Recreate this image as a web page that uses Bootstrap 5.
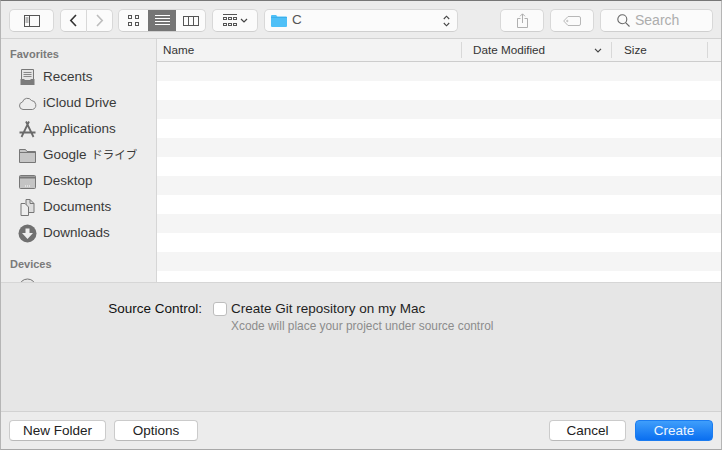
<!DOCTYPE html>
<html lang="en">
<head>
<meta charset="utf-8">
<title>Save dialog</title>
<link href="https://cdn.jsdelivr.net/npm/bootstrap@5.3.0/dist/css/bootstrap.min.css" rel="stylesheet">
<style>
html,body{margin:0;width:722px;height:450px;overflow:hidden;background:#ececec}
body{font-family:"Helvetica Neue","Liberation Sans",Arial,"Noto Sans CJK JP",sans-serif;font-size:13.5px;color:#2b2b2b}
.dlg{width:722px;height:450px;border-left:1px solid #b5b5b5;border-right:1px solid #b5b5b5;border-top:1px solid #777;border-bottom:1px solid #a8a8a8;background:#ececec}
.tbar{height:38px;flex:none;background:#ececec;border-bottom:1px solid #d2d2d2;padding:8px 8px 0 8px}
.tb{height:23px;flex:none;background:#fbfbfb;border:1px solid #d8d8d8;border-bottom-color:#cfcfcf;border-radius:5px;padding:0}
.w-side{width:45px;margin-right:6px}
.w-back{width:27px;border-radius:5px 0 0 5px}
.w-fwd{width:26px;border-left:0;border-radius:0 5px 5px 0;margin-right:5px}
.w-grp{width:88px;margin-right:6px;overflow:hidden}
.seg{flex:1 1 0}
.seg-on{background:#757575}
.w-arr{width:46px;margin-right:6px;gap:3px}
.w-path{width:194px;padding:0 7px 0 6px;margin-right:42px}
.w-share{width:44px;margin-right:6px}
.w-tag{width:44px;margin-right:6px}
.w-search{width:113px;padding-left:16px;gap:5px;color:#adadad;font-size:14px}
.path-name{font-size:13.5px;color:#555;margin-left:5px;flex:1}
.main-area{height:243px;flex:none}
.sidebar{width:156px;flex:none;background:#ededed;border-right:1px solid #d6d6d6;overflow:hidden;padding-top:8px}
.side-title{font-size:11px;font-weight:700;color:#7a7a7a;height:15px;line-height:15px;padding-left:9px;margin-bottom:2px}
.side-row{height:26px;padding-left:17px;gap:6px;color:#3a3a3a;font-size:13.5px}
.side-row svg{flex:none;width:19px;height:19px}
.side-gap{margin-top:11px}
.kana{font-size:11.5px;margin-left:1px}
.listing{flex:1;background:#fff;overflow:hidden}
.head-row{height:23px;background:#f3f3f3;border-bottom:1px solid #cdcdcd;font-size:11.7px;color:#333}
.cell-name{width:304px;flex:none;padding-left:6px}
.cell-date{width:150px;flex:none;padding-left:11px;padding-right:9px;border-left:1px solid #d8d8d8;height:16px}
.cell-size{width:96px;flex:none;padding-left:12px;border-left:1px solid #d8d8d8;height:16px;line-height:16px}
.cell-end{flex:1;border-left:1px solid #d8d8d8;height:16px}
.file-row{height:19px;background:#fff}
.file-row:nth-child(odd){background:#f5f5f5}
.opts{height:130px;flex:none;background:#e6e6e6;border-top:1px solid #d6d6d6;border-bottom:1px solid #d2d2d2;padding-top:17px;color:#111}
.opt-label{width:201px;text-align:right;height:17px;line-height:17px}
.chk{width:14px;height:14px;background:#fff;border:1px solid #bdbdbd;border-radius:3px;margin-left:11px;margin-right:4px;flex:none}
.opt-text{height:17px;line-height:17px;color:#1f1f1f}
.opt-hint{font-size:11.9px;color:#8c8c8c;margin-left:230px;margin-top:2px;line-height:15px}
.foot{flex:1;padding:8px 8px 0 8px;background:#ececec}
.btn-mac{height:21px;flex:none;padding:0;font-size:13.5px;line-height:19px;background:#fff;color:#222;border:1px solid #cbcbcb;border-bottom-color:#b9b9b9;border-radius:4px}
.btn-new{width:97px;margin-right:8px}
.btn-opt{width:84px}
.btn-cancel{width:77px;margin-right:9px}
.btn-create{width:78px;color:#eef6ff;border:1px solid #1b7cf0;background:linear-gradient(#3f9efb,#0a6ff0)}
</style>
</head>
<body>
<div class="dlg d-flex flex-column">
  <div class="tbar d-flex align-items-start">
    <button class="tb w-side d-flex align-items-center justify-content-center" aria-label="Sidebar"><svg width="16" height="12" viewBox="0 0 16 12"><rect x=".5" y=".5" width="15" height="11" fill="none" stroke="#555"/><path d="M5.500 1v10" stroke="#555"/><path d="M1.500 3h3M1.500 5h3M1.500 7h3" stroke="#777"/></svg></button>
    <button class="tb w-back d-flex align-items-center justify-content-center" aria-label="Back"><svg width="9" height="13" viewBox="0 0 9 13"><path d="M7 1 1.800 6.500 7 12" fill="none" stroke="#333" stroke-width="1.600"/></svg></button>
    <button class="tb w-fwd d-flex align-items-center justify-content-center" aria-label="Forward"><svg width="9" height="13" viewBox="0 0 9 13"><path d="M2 1l5.200 5.500L2 12" fill="none" stroke="#bdbdbd" stroke-width="1.600"/></svg></button>
    <div class="tb w-grp d-flex">
      <div class="seg d-flex align-items-center justify-content-center"><svg width="11" height="11" viewBox="0 0 11 11" fill="none" stroke="#555"><rect x=".5" y=".5" width="3" height="3"/><rect x="7.500" y=".5" width="3" height="3"/><rect x=".5" y="7.500" width="3" height="3"/><rect x="7.500" y="7.500" width="3" height="3"/></svg></div>
      <div class="seg seg-on d-flex align-items-center justify-content-center"><svg width="15" height="11" viewBox="0 0 15 11" stroke="#fff"><path d="M0 .5h15M0 3.500h15M0 6.500h15M0 9.500h15"/></svg></div>
      <div class="seg d-flex align-items-center justify-content-center"><svg width="16" height="10" viewBox="0 0 16 10" fill="none" stroke="#555"><rect x=".5" y=".5" width="15" height="9"/><path d="M5.500 0v10M10.500 0v10"/></svg></div>
    </div>
    <button class="tb w-arr d-flex align-items-center justify-content-center" aria-label="Arrange"><svg width="14" height="13" viewBox="0 0 14 13" fill="none" stroke="#555"><path d="M0 .5h14"/><rect x=".5" y="3.500" width="3" height="2"/><rect x="5.500" y="3.500" width="3" height="2"/><rect x="10.500" y="3.500" width="3" height="2"/><rect x=".5" y="9.500" width="3" height="2"/><rect x="5.500" y="9.500" width="3" height="2"/><rect x="10.500" y="9.500" width="3" height="2"/></svg><svg width="8" height="5" viewBox="0 0 8 5"><path d="M1 1l3 3 3-3" fill="none" stroke="#444" stroke-width="1.200"/></svg></button>
    <div class="tb w-path d-flex align-items-center"><svg width="16" height="13" viewBox="0 0 16 13"><path d="M0 2a1 1 0 0 1 1-1h4l1.500 1.500H15a1 1 0 0 1 1 1V12a1 1 0 0 1-1 1H1a1 1 0 0 1-1-1z" fill="#4fc0f7"/><path d="M0 3.500h16" stroke="#2fa4e4" stroke-width=".6"/></svg><span class="path-name">C</span><svg width="7" height="12" viewBox="0 0 7 12" fill="none" stroke="#444" stroke-width="1.100"><path d="M.8 4 3.500 1.200 6.200 4M.8 8l2.700 2.800L6.200 8"/></svg></div>
    <button class="tb w-share d-flex align-items-center justify-content-center" aria-label="Share"><svg width="11" height="15" viewBox="0 0 11 15" fill="none" stroke="#b0b0b0"><path d="M3.500 5.500H.5v9h10v-9h-3M5.500 10V1M3 3.300 5.500.8 8 3.300"/></svg></button>
    <button class="tb w-tag d-flex align-items-center justify-content-center" aria-label="Tags"><svg width="18" height="10" viewBox="0 0 18 10" fill="none" stroke="#b8b8b8"><path d="M5 .5h11a1.500 1.500 0 0 1 1.500 1.500v6A1.500 1.500 0 0 1 16 9.500H5L.7 5z"/><circle cx="4.300" cy="5" r=".7"/></svg></button>
    <div class="tb w-search d-flex align-items-center"><svg width="13" height="13" viewBox="0 0 13 13" fill="none" stroke="#666" stroke-width="1.100"><circle cx="5.300" cy="5.300" r="4.500"/><path d="M8.600 8.600 12.500 12.500"/></svg><span>Search</span></div>
  </div>
  <div class="main-area d-flex">
    <div class="sidebar">
      <div class="side-title">Favorites</div>
      <div class="side-row d-flex align-items-center"><svg viewBox="0 0 19 19"><path d="M3.500 1.500h12v11h-12z" fill="#e4e4e4" stroke="#777"/><path d="M5.500 4.500h8M5.500 6.500h8M5.500 8.500h8" stroke="#888"/><path d="M2.500 11h4v1.500h6V11h4v6h-14z" fill="#7c7c7c"/></svg><span>Recents</span></div>
      <div class="side-row d-flex align-items-center"><svg viewBox="0 0 19 19"><path d="M5 15.500a3.800 3.800 0 0 1-.5-7.500A5 5 0 0 1 13.500 6.500a4.600 4.600 0 0 1 1 9z" fill="none" stroke="#808080"/></svg><span>iCloud Drive</span></div>
      <div class="side-row d-flex align-items-center"><svg viewBox="0 0 19 19" fill="none" stroke="#6a6a6a" stroke-width="1.800"><path d="M11 1.500 3.500 17M8 1.500 15.500 17M1.500 12.500h16"/></svg><span>Applications</span></div>
      <div class="side-row d-flex align-items-center"><svg viewBox="0 0 19 19"><path d="M1.500 3.500h6l1.500 2h8.500v11h-16z" fill="#c6c6c6" stroke="#777"/><path d="M1.500 6.500h16" stroke="#777"/></svg><span>Google <span class="kana">ドライブ</span></span></div>
      <div class="side-row d-flex align-items-center"><svg viewBox="0 0 19 19"><rect x="1.500" y="3.500" width="16" height="13" rx="1" fill="#c4c4c4" stroke="#777"/><path d="M1.500 5.500h16" stroke="#777" stroke-width="2"/><path d="M7 14h1M9 14h1M11 14h1" stroke="#fff"/></svg><span>Desktop</span></div>
      <div class="side-row d-flex align-items-center"><svg viewBox="0 0 19 19"><path d="M8 1.500h4l4 4v9H8z" fill="#ddd" stroke="#777"/><path d="M12 1.500v4h4" fill="none" stroke="#777"/><path d="M3 5.500h4l3.500 3.500v8.500H3z" fill="#eee" stroke="#777"/></svg><span>Documents</span></div>
      <div class="side-row d-flex align-items-center"><svg viewBox="0 0 19 19"><circle cx="9.500" cy="9.500" r="9" fill="#707070"/><path d="M7.500 4.500h4V9H15l-5.500 6L4 9h3.500z" fill="#eee"/></svg><span>Downloads</span></div>
      <div class="side-title side-gap">Devices</div>
      <div class="side-row d-flex align-items-center"><svg viewBox="0 0 19 19"><circle cx="9.500" cy="9.500" r="8.500" fill="#e6e6e6" stroke="#777"/></svg></div>
    </div>
    <div class="listing">
      <div class="head-row d-flex align-items-center">
        <div class="cell-name">Name</div>
        <div class="cell-date d-flex align-items-center justify-content-between"><span>Date Modified</span><svg width="8" height="5" viewBox="0 0 8 5"><path d="M1 .8l3 3 3-3" fill="none" stroke="#444" stroke-width="1.200"/></svg></div>
        <div class="cell-size">Size</div>
        <div class="cell-end"></div>
      </div>
      <div>
        <div class="file-row"></div><div class="file-row"></div><div class="file-row"></div><div class="file-row"></div><div class="file-row"></div><div class="file-row"></div><div class="file-row"></div><div class="file-row"></div><div class="file-row"></div><div class="file-row"></div><div class="file-row"></div><div class="file-row"></div>
      </div>
    </div>
  </div>
  <div class="opts">
    <div class="d-flex align-items-center">
      <div class="opt-label">Source Control:</div>
      <div class="chk"></div>
      <div class="opt-text">Create Git repository on my Mac</div>
    </div>
    <div class="opt-hint">Xcode will place your project under source control</div>
  </div>
  <div class="foot d-flex align-items-start">
    <button class="btn btn-mac btn-new">New Folder</button>
    <button class="btn btn-mac btn-opt">Options</button>
    <button class="btn btn-mac btn-cancel ms-auto">Cancel</button>
    <button class="btn btn-mac btn-create">Create</button>
  </div>
</div>
</body>
</html>
